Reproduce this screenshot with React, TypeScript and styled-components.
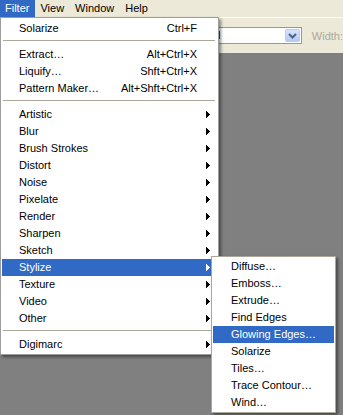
import React from "react";
import styled, { createGlobalStyle } from "styled-components";

const GlobalStyle = createGlobalStyle`
    html, body {
        margin: 0;
        padding: 0;
        background: #808080;
    }
    body {
        font-family: "Liberation Sans", Arial, sans-serif;
        font-size: 11px;
        color: #000;
    }
`;

const Screen = styled.div`
    position: relative;
    width: 343px;
    height: 415px;
    overflow: hidden;
    display: flex;
    flex-direction: column;
`;

const MenuBar = styled.div`
    height: 17px;
    background: #ece9d8;
    display: flex;
`;

const MenuBarItem = styled.div<{ $active?: boolean }>`
    padding: 0 6px 0 5px;
    line-height: 17px;
    background: ${p => (p.$active ? "#316ac5" : "transparent")};
    color: ${p => (p.$active ? "#fff" : "#000")};
`;

const Toolbar = styled.div`
    height: 35px;
    border-top: 1px solid #fff;
    background: #ece9d8;
    display: flex;
    align-items: center;
`;

const Combo = styled.div`
    margin-left: 180px;
    width: 125px;
    height: 15px;
    border: 1px solid #7f9db9;
    background: #fff;
    display: flex;
    align-items: center;
    justify-content: space-between;
`;

const ComboText = styled.span`
    padding-left: 4px;
    line-height: 15px;
`;

const ComboButton = styled.div`
    width: 15px;
    height: 13px;
    margin-right: 1px;
    border-radius: 2px;
    border: 1px solid #b9cbf3;
    box-sizing: border-box;
    background: linear-gradient(#d6e3fd, #b4c9f6);
    display: flex;
    align-items: center;
    justify-content: center;
`;

const ToolLabel = styled.span`
    margin-left: 10px;
    color: #aca899;
    white-space: nowrap;
`;

const Workspace = styled.div`
    flex: 1;
    background: #808080;
`;

const Menu = styled.div`
    position: absolute;
    top: 17px;
    left: 0;
    width: 215px;
    padding: 2px 1px 1px;
    background: #fff;
    border: 1px solid #9d9d9d;
    box-shadow: 2px 2px 3px rgba(0, 0, 0, 0.45);
    z-index: 2;
`;

const SubMenu = styled.div`
    position: absolute;
    top: -3px;
    left: 209px;
    width: 121px;
    padding: 1px;
    background: #fff;
    border: 1px solid #aca899;
    box-shadow: 2px 2px 3px rgba(0, 0, 0, 0.45);
    color: #000;
    z-index: 3;
`;

const Item = styled.div<{ $active?: boolean; $indent?: number }>`
    position: relative;
    height: 17px;
    line-height: 17px;
    display: grid;
    grid-template-columns: 1fr auto 20px;
    padding-left: ${p => p.$indent ?? 17}px;
    background: ${p => (p.$active ? "#316ac5" : "transparent")};
    color: ${p => (p.$active ? "#fff" : "#000")};
    white-space: nowrap;
`;

const Shortcut = styled.span`
    text-align: right;
`;

const ArrowCell = styled.span`
    padding-left: 9px;
    display: flex;
    align-items: center;
`;

const Separator = styled.div`
    height: 9px;
    display: flex;
    align-items: flex-start;
    padding: 3px 2px 0 1px;
    box-sizing: border-box;
    &::before {
        content: "";
        flex: 1;
        height: 1px;
        background: #aca899;
    }
`;

const Arrow = ({ color }: { color: string }) => (
    <svg width="4" height="7" viewBox="0 0 4 7" shapeRendering="crispEdges">
        <polygon points="0,0 4,3.5 0,7" fill={color} />
    </svg>
);

const Chevron = () => (
    <svg width="9" height="6" viewBox="0 0 9 6">
        <path d="M1 1 L4.5 4.5 L8 1" fill="none" stroke="#4d6185" strokeWidth="2" />
    </svg>
);

type Entry = { label: string; shortcut?: string; sub?: boolean } | "sep";

const filterItems: Entry[] = [
    { label: "Solarize", shortcut: "Ctrl+F" },
    "sep",
    { label: "Extract…", shortcut: "Alt+Ctrl+X" },
    { label: "Liquify…", shortcut: "Shft+Ctrl+X" },
    { label: "Pattern Maker…", shortcut: "Alt+Shft+Ctrl+X" },
    "sep",
    { label: "Artistic", sub: true },
    { label: "Blur", sub: true },
    { label: "Brush Strokes", sub: true },
    { label: "Distort", sub: true },
    { label: "Noise", sub: true },
    { label: "Pixelate", sub: true },
    { label: "Render", sub: true },
    { label: "Sharpen", sub: true },
    { label: "Sketch", sub: true },
    { label: "Stylize", sub: true },
    { label: "Texture", sub: true },
    { label: "Video", sub: true },
    { label: "Other", sub: true },
    "sep",
    { label: "Digimarc", sub: true }
];

const stylizeItems = [
    "Diffuse…",
    "Emboss…",
    "Extrude…",
    "Find Edges",
    "Glowing Edges…",
    "Solarize",
    "Tiles…",
    "Trace Contour…",
    "Wind…"
];

const App: React.FC = () => {
    return (
        <Screen>
            <GlobalStyle />
            <MenuBar>
                <MenuBarItem $active>Filter</MenuBarItem>
                <MenuBarItem>View</MenuBarItem>
                <MenuBarItem>Window</MenuBarItem>
                <MenuBarItem>Help</MenuBarItem>
            </MenuBar>
            <Toolbar>
                <Combo>
                    <ComboText>Normal</ComboText>
                    <ComboButton>
                        <Chevron />
                    </ComboButton>
                </Combo>
                <ToolLabel>Width:</ToolLabel>
            </Toolbar>
            <Workspace />

            <Menu>
                {filterItems.map((it, i) => {
                    if (it === "sep") return <Separator key={i} />;
                    const active = it.label === "Stylize";
                    return (
                        <Item key={i} $active={active}>
                            <span>{it.label}</span>
                            <Shortcut>{it.shortcut}</Shortcut>
                            <ArrowCell>{it.sub && <Arrow color={active ? "#fff" : "#000"} />}</ArrowCell>
                            {active && (
                                <SubMenu>
                                    {stylizeItems.map(s => (
                                        <Item key={s} $indent={18} $active={s === "Glowing Edges…"}>
                                            <span>{s}</span>
                                        </Item>
                                    ))}
                                </SubMenu>
                            )}
                        </Item>
                    );
                })}
            </Menu>
        </Screen>
    );
};

export default App;
